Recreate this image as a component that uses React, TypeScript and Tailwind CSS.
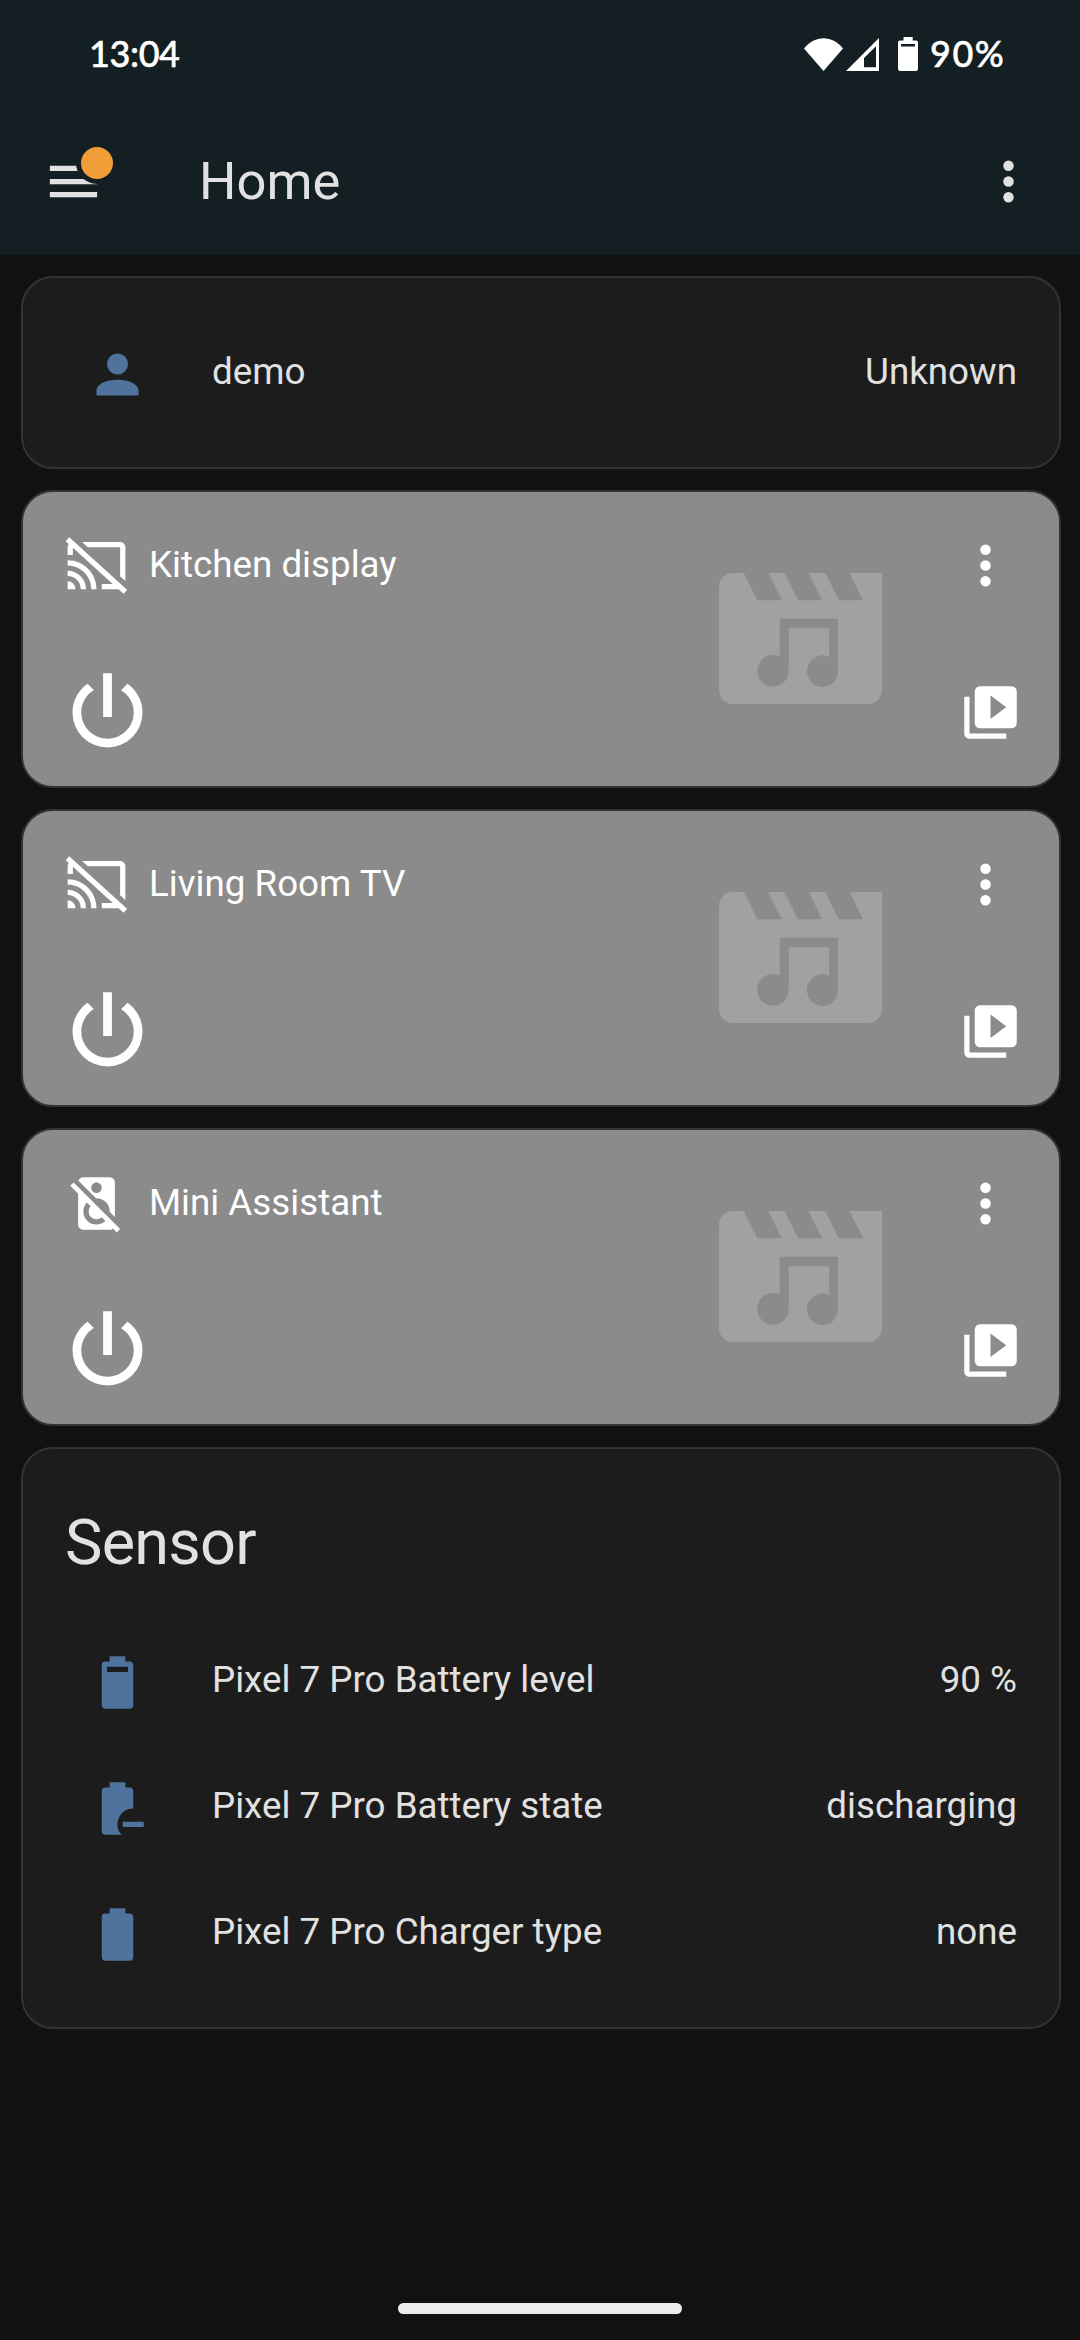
import type { ReactNode } from "react";

const mdi = {
  menu: "M3,6H21V8H3V6M3,11H21V13H3V11M3,16H21V18H3V16Z",
  dots: "M12,16A2,2 0 0,1 14,18A2,2 0 0,1 12,20A2,2 0 0,1 10,18A2,2 0 0,1 12,16M12,10A2,2 0 0,1 14,12A2,2 0 0,1 12,14A2,2 0 0,1 10,12A2,2 0 0,1 12,10M12,4A2,2 0 0,1 14,6A2,2 0 0,1 12,8A2,2 0 0,1 10,6A2,2 0 0,1 12,4Z",
  account:
    "M12,4A4,4 0 0,1 16,8A4,4 0 0,1 12,12A4,4 0 0,1 8,8A4,4 0 0,1 12,4M12,14C16.42,14 20,15.79 20,18V20H4V18C4,15.79 7.58,14 12,14Z",
  castOff:
    "M1.6,1.27L0.25,2.75L1.41,3.8C1.16,4.13 1,4.55 1,5V8H3V5.23L18.2,19H14V21H20.41L22.31,22.72L23.65,21.24M6.5,3L8.7,5H21V16.14L23,17.95V5C23,3.89 22.1,3 21,3M1,10V12A9,9 0 0,1 10,21H12C12,14.92 7.08,10 1,10M1,14V16A5,5 0 0,1 6,21H8A7,7 0 0,0 1,14M1,18V21H4A3,3 0 0,0 1,18Z",
  speakerOff:
    "M2,5.27L3.28,4L21,21.72L19.73,23L18.27,21.54C17.93,21.83 17.5,22 17,22H7C5.89,22 5,21.1 5,20V8.27L2,5.27M12,18A3,3 0 0,1 9,15C9,14.24 9.28,13.54 9.75,13L8.33,11.6C7.5,12.5 7,13.69 7,15A5,5 0 0,0 12,20C13.31,20 14.5,19.5 15.4,18.67L14,17.25C13.45,17.72 12.76,18 12,18M17,15A5,5 0 0,0 12,10H11.82L5.12,3.3C5.41,2.54 6.14,2 7,2H17A2,2 0 0,1 19,4V17.18L17,15.17V15M12,4C10.89,4 10,4.89 10,6A2,2 0 0,0 12,8A2,2 0 0,0 14,6C14,4.89 13.1,4 12,4Z",
  power:
    "M16.56,5.44L15.11,6.89C16.84,7.94 18,9.83 18,12A6,6 0 0,1 12,18A6,6 0 0,1 6,12C6,9.83 7.16,7.94 8.88,6.88L7.44,5.44C5.36,6.88 4,9.28 4,12A8,8 0 0,0 12,20A8,8 0 0,0 20,12C20,9.28 18.64,6.88 16.56,5.44M13,3H11V13H13",
  playBoxMultiple:
    "M4,6H2V20A2,2 0 0,0 4,22H18V20H4V6M20,2H8A2,2 0 0,0 6,4V16A2,2 0 0,0 8,18H20A2,2 0 0,0 22,16V4A2,2 0 0,0 20,2M12,14.5V5.5L18,10L12,14.5Z",
  battery90:
    "M16,8H8V6H16M16.67,4H15V2H9V4H7.33A1.33,1.33 0 0,0 6,5.33V20.67C6,21.4 6.6,22 7.33,22H16.67A1.33,1.33 0 0,0 18,20.67V5.33C18,4.6 17.4,4 16.67,4Z",
  batteryMinus:
    "M16.67,4H15V2H9V4H7.33A1.33,1.33 0 0,0 6,5.33V20.67C6,21.4 6.6,22 7.33,22H13.53A6,6 0 0,1 18,12V5.33C18,4.6 17.4,4 16.67,4M14,17V19H22V17H14Z",
  battery:
    "M16.67,4H15V2H9V4H7.33A1.33,1.33 0 0,0 6,5.33V20.67C6,21.4 6.6,22 7.33,22H16.67A1.33,1.33 0 0,0 18,20.67V5.33C18,4.6 17.4,4 16.67,4Z",
};

function Icon({ path, className = "size-[63px]" }: { path: string; className?: string }) {
  return (
    <svg viewBox="0 0 24 24" className={`block shrink-0 ${className}`} fill="currentColor" fillRule="evenodd">
      <path d={path} />
    </svg>
  );
}

function StatusBar() {
  return (
    <div className="flex h-[108px] items-center justify-between pr-[75px] pl-[89px] font-['Lato',sans-serif] text-[36px] font-medium text-white">
      <span className="mb-[2px] tracking-[-0.4px] [-webkit-text-stroke:0.5px_white]">13:04</span>
      <div className="flex items-center">
        <svg width="76" height="34" viewBox="804 36 76 34" fill="currentColor">
          <path d="M804 47.5C815 33.8 832 33.8 843 47.5L823.5 70Z" />
          <path fillRule="evenodd" d="M846 70L879 37V70ZM864 57V66.3H876V45.3Z" />
        </svg>
        <svg width="20" height="34" viewBox="0 0 20 34" className="ml-[18px]" fill="currentColor">
          <path
            fillRule="evenodd"
            d="M5.5 0H14.7V3.5H18A2 2 0 0 1 20 5.5V32A2 2 0 0 1 18 34H2A2 2 0 0 1 0 32V5.5A2 2 0 0 1 2 3.5H5.500ZM3 7V9.500H17V7Z"
          />
        </svg>
        <span className="mb-[2px] ml-[12px] w-[75px] tracking-[1.5px] whitespace-nowrap [-webkit-text-stroke:0.5px_white]">90%</span>
      </div>
    </div>
  );
}

function Toolbar() {
  return (
    <div className="flex h-[147px] items-center pr-[40px] pl-[42px] text-[#e1e1e1]">
      <div className="relative">
        <Icon path={mdi.menu} />
        <span className="absolute top-[-8px] left-[34px] size-[42px] rounded-full border-[5px] border-[#141f23] bg-[#f19e38]" />
      </div>
      <h1 className="ml-[94px] flex-1 text-[52.5px] leading-none">Home</h1>
      <Icon path={mdi.dots} />
    </div>
  );
}

function Card({ children, className = "" }: { children: ReactNode; className?: string }) {
  return <section className={`rounded-[32px] border-2 border-[#333333] ${className}`}>{children}</section>;
}

function EntityRow({ icon, name, state }: { icon: string; name: string; state: string }) {
  return (
    <div className="flex h-[105px] items-center pr-[42px] pl-[63px] text-[36.75px] leading-[52px] text-[#e1e1e1]">
      <Icon path={icon} className="mt-[6px] size-[63px] text-[#4f739c]" />
      <span className="ml-[63px] flex-1">{name}</span>
      <span>{state}</span>
    </div>
  );
}

function MediaArtwork() {
  return (
    <svg width="163" height="131" viewBox="2 4 20 16" preserveAspectRatio="none" className="mt-[81px] mr-[72px] ml-auto shrink-0">
      <path
        fill="#a1a1a1"
        d="M3.7 4H5.050L6.700 7.330H9.700L8.030 4H10.030L11.700 7.330H14.650L13 4H15.030L16.700 7.330H19.670L18.030 4H22V18.300A1.700 1.700 0 0 1 20.300 20H3.700A1.700 1.700 0 0 1 2 18.300V5.700A1.700 1.700 0 0 1 3.700 4Z"
      />
      <path
        fill="#8b8b8b"
        d="M9.450 9.600H16.600V15.950A1.900 1.930 0 1 1 15.530 14.250V10.750H10.550V15.950A1.930 1.930 0 1 1 9.450 14.200Z"
      />
    </svg>
  );
}

function MediaCard({ icon, name }: { icon: string; name: string }) {
  return (
    <Card className="flex h-[298px] bg-[#8b8b8b] pr-[42px] pl-[42px] text-white">
      <div className="pt-[42px]">
        <div className="flex h-[63px] items-center text-[36.75px] leading-[52px]">
          <Icon path={icon} />
          <span className="mb-[2px] ml-[21px]">{name}</span>
        </div>
        <Icon path={mdi.power} className="mt-[63px] ml-[-10px] size-[105px]" />
      </div>
      <MediaArtwork />
      <div className="w-[63px] pt-[42px]">
        <Icon path={mdi.dots} />
        <Icon path={mdi.playBoxMultiple} className="mt-[84px] ml-[5px] size-[63px]" />
      </div>
    </Card>
  );
}

export default function App() {
  return (
    <div className="flex h-[2340px] w-[1080px] flex-col overflow-hidden bg-[#111111] font-['Roboto',sans-serif]">
      <header className="h-[255px] bg-[#141f23]">
        <StatusBar />
        <Toolbar />
      </header>
      <main className="flex flex-1 flex-col gap-[21px] pt-[21px] pr-[19px] pl-[21px]">
        <Card className="h-[193px] bg-[#1c1c1c] pt-[41px]">
          <EntityRow icon={mdi.account} name="demo" state="Unknown" />
        </Card>
        <MediaCard icon={mdi.castOff} name="Kitchen display" />
        <MediaCard icon={mdi.castOff} name="Living Room TV" />
        <MediaCard icon={mdi.speakerOff} name="Mini Assistant" />
        <Card className="h-[582px] bg-[#1c1c1c]">
          <h2 className="mt-[62px] pl-[42px] text-[63px] leading-[63px] tracking-[-0.75px] text-[#e1e1e1]">Sensor</h2>
          <div className="mt-[53px] flex flex-col gap-[21px]">
            <EntityRow icon={mdi.battery90} name="Pixel 7 Pro Battery level" state="90 %" />
            <EntityRow icon={mdi.batteryMinus} name="Pixel 7 Pro Battery state" state="discharging" />
            <EntityRow icon={mdi.battery} name="Pixel 7 Pro Charger type" state="none" />
          </div>
        </Card>
      </main>
      <div className="mx-auto mb-[26px] h-[11px] w-[284px] shrink-0 rounded-full bg-[#ebebeb]" />
    </div>
  );
}
